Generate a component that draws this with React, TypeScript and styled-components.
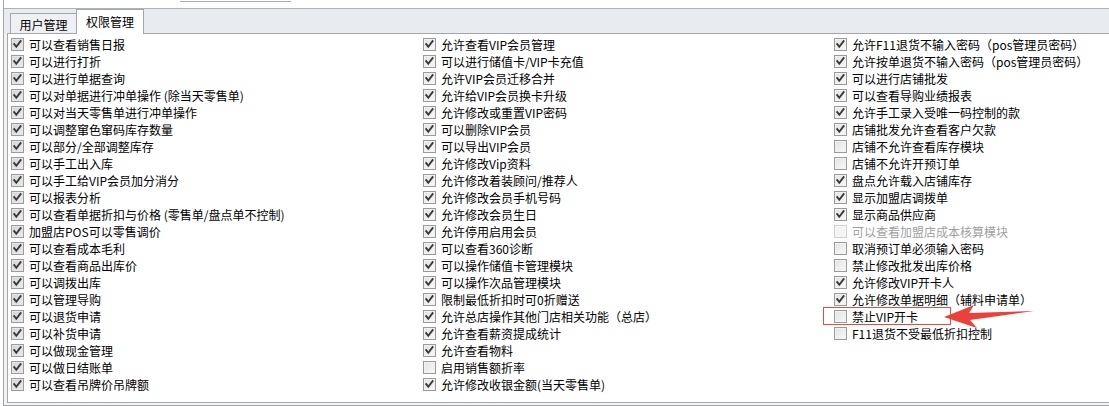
import React from "react";
import styled, { createGlobalStyle, css } from "styled-components";

const Global = createGlobalStyle`
  html, body { margin: 0; padding: 0; background: #ffffff; }
  body { font-family: "Noto Sans CJK SC", "Noto Sans", sans-serif; font-size: 12px; color: #000; }
`;

type Item = { label: string; checked: boolean; disabled?: boolean; flagged?: boolean };

const col1: Item[] = [
  "可以查看销售日报",
  "可以进行打折",
  "可以进行单据查询",
  "可以对单据进行冲单操作 (除当天零售单)",
  "可以对当天零售单进行冲单操作",
  "可以调整窜色窜码库存数量",
  "可以部分/全部调整库存",
  "可以手工出入库",
  "可以手工给VIP会员加分消分",
  "可以报表分析",
  "可以查看单据折扣与价格 (零售单/盘点单不控制)",
  "加盟店POS可以零售调价",
  "可以查看成本毛利",
  "可以查看商品出库价",
  "可以调拨出库",
  "可以管理导购",
  "可以退货申请",
  "可以补货申请",
  "可以做现金管理",
  "可以做日结账单",
  "可以查看吊牌价吊牌额",
].map((label) => ({ label, checked: true }));

const col2: Item[] = [
  { label: "允许查看VIP会员管理", checked: true },
  { label: "可以进行储值卡/VIP卡充值", checked: true },
  { label: "允许VIP会员迁移合并", checked: true },
  { label: "允许给VIP会员换卡升级", checked: true },
  { label: "允许修改或重置VIP密码", checked: true },
  { label: "可以删除VIP会员", checked: true },
  { label: "可以导出VIP会员", checked: true },
  { label: "允许修改Vip资料", checked: true },
  { label: "允许修改着装顾问/推荐人", checked: true },
  { label: "允许修改会员手机号码", checked: true },
  { label: "允许修改会员生日", checked: true },
  { label: "允许停用启用会员", checked: true },
  { label: "可以查看360诊断", checked: true },
  { label: "可以操作储值卡管理模块", checked: true },
  { label: "可以操作次品管理模块", checked: true },
  { label: "限制最低折扣时可0折赠送", checked: true },
  { label: "允许总店操作其他门店相关功能（总店）", checked: true },
  { label: "允许查看薪资提成统计", checked: true },
  { label: "允许查看物料", checked: true },
  { label: "启用销售额折率", checked: false },
  { label: "允许修改收银金额(当天零售单)", checked: true },
];

const col3: Item[] = [
  { label: "允许F11退货不输入密码（pos管理员密码）", checked: true },
  { label: "允许按单退货不输入密码（pos管理员密码）", checked: true },
  { label: "可以进行店铺批发", checked: true },
  { label: "可以查看导购业绩报表", checked: true },
  { label: "允许手工录入受唯一码控制的款", checked: true },
  { label: "店铺批发允许查看客户欠款", checked: true },
  { label: "店铺不允许查看库存模块", checked: false },
  { label: "店铺不允许开预订单", checked: false },
  { label: "盘点允许载入店铺库存", checked: true },
  { label: "显示加盟店调拨单", checked: true },
  { label: "显示商品供应商", checked: true },
  { label: "可以查看加盟店成本核算模块", checked: false, disabled: true },
  { label: "取消预订单必须输入密码", checked: false },
  { label: "禁止修改批发出库价格", checked: false },
  { label: "允许修改VIP开卡人", checked: true },
  { label: "允许修改单据明细（辅料申请单）", checked: true },
  { label: "禁止VIP开卡", checked: false, flagged: true },
  { label: "F11退货不受最低折扣控制", checked: false },
];

const Frame = styled.div`
  margin-left: 3px;
  width: calc(100vw - 3px);
  height: 406px;
  box-sizing: border-box;
  border-left: 1px solid #a3a6ab;
  border-bottom: 1px solid #a3a6ab;
  display: flex;
  flex-direction: column;
  overflow: hidden;
`;

const TopStrip = styled.div`
  height: 8px;
  background: #ffffff;
  display: flex;
`;

const FieldStub = styled.div`
  margin-left: 176px;
  width: 111px;
  height: 1px;
  border-bottom: 1px solid #a9acb2;
`;

const TabBar = styled.div`
  height: 24px;
  border-top: 1px solid #aeb2b9;
  background: #e8ebf0;
  display: flex;
  align-items: flex-end;
  padding-left: 6px;
`;

const Tab = styled.div<{ $active?: boolean }>`
  box-sizing: border-box;
  display: flex;
  align-items: center;
  justify-content: center;
  border: 1px solid #a3a6ab;
  border-bottom: none;
  font-size: 12px;
  color: #000;
  ${(p) =>
    p.$active
      ? css`
          width: 68px;
          height: 25px;
          margin-left: -1px;
          margin-bottom: -1px;
          background: #ffffff;
          position: relative;
          z-index: 1;
          padding-bottom: 2px;
        `
      : css`
          width: 67px;
          height: 20px;
          background: #eef0f3;
          padding-top: 1px;
        `}
`;

const Body = styled.div`
  flex: 1;
  background: #f2f2f2;
  padding: 0 0 2px 3px;
  display: flex;
  flex-direction: column;
`;

const Panel = styled.div`
  flex: 1;
  background: #ffffff;
  border: 1px solid #a3a6ab;
  border-right: none;
  padding: 2px 0 0 3px;
  display: grid;
  grid-template-columns: 412px 411px 1fr;
  align-items: start;
`;

const Column = styled.div`
  display: flex;
  flex-direction: column;
`;

const Row = styled.div<{ $disabled?: boolean }>`
  position: relative;
  height: 17px;
  display: flex;
  align-items: center;
  gap: 5px;
  white-space: pre;
  color: ${(p) => (p.$disabled ? "#a0a0a0" : "#000")};
`;

const Label = styled.span`
  font-size: 12px;
  line-height: 17px;
`;

const Box = styled.span<{ $tone: "gray" | "normal"; $disabled?: boolean }>`
  width: 13px;
  height: 13px;
  box-sizing: border-box;
  flex: none;
  display: inline-flex;
  border: 1px solid ${(p) => (p.$disabled ? "#cfcfcf" : p.$tone === "gray" ? "#9c9c9c" : "#9a9a9a")};
  background: ${(p) =>
    p.$disabled
      ? "#f3f3f3"
      : p.$tone === "gray"
      ? "linear-gradient(135deg, #d4d4d4, #ececec)"
      : "linear-gradient(135deg, #e2e2e2, #f9f9f9)"};
  box-shadow: inset 0 0 0 1px ${(p) => (p.$disabled ? "#f7f7f7" : p.$tone === "gray" ? "#e6e6e6" : "#f2f2f2")};
`;

const Highlight = styled.span`
  position: absolute;
  left: -11px;
  top: -1px;
  width: 128px;
  height: 18px;
  border: 1.5px solid #ea4a43;
  box-sizing: border-box;
  pointer-events: none;
`;

const ArrowWrap = styled.svg`
  position: absolute;
  left: 106px;
  top: -8px;
  width: 100px;
  height: 32px;
  overflow: visible;
`;

function CheckBox({ checked, tone, disabled }: { checked: boolean; tone: "gray" | "normal"; disabled?: boolean }) {
  return (
    <Box $tone={tone} $disabled={disabled}>
      {checked && (
        <svg width="11" height="11" viewBox="0 0 11 11">
          <path d="M2.2 5.2 L4.3 7.8 L8.6 2.2" fill="none" stroke="#3a3a3a" strokeWidth="1.9" strokeLinecap="square" />
        </svg>
      )}
    </Box>
  );
}

function Arrow() {
  return (
    <ArrowWrap viewBox="0 0 100 32">
      <polygon points="4,17 34,5 29,13 94,11 30,20 37,28" fill="#ec4038" />
    </ArrowWrap>
  );
}

function List({ items, tone }: { items: Item[]; tone: "gray" | "normal" }) {
  return (
    <Column>
      {items.map((it) => (
        <Row key={it.label} $disabled={it.disabled}>
          <CheckBox checked={it.checked} tone={tone} disabled={it.disabled} />
          <Label>{it.label}</Label>
          {it.flagged && (
            <>
              <Highlight />
              <Arrow />
            </>
          )}
        </Row>
      ))}
    </Column>
  );
}

export default function App() {
  return (
    <>
      <Global />
      <Frame>
        <TopStrip>
          <FieldStub />
        </TopStrip>
        <TabBar>
          <Tab>用户管理</Tab>
          <Tab $active>权限管理</Tab>
        </TabBar>
        <Body>
          <Panel>
            <List items={col1} tone="gray" />
            <List items={col2} tone="normal" />
            <List items={col3} tone="normal" />
          </Panel>
        </Body>
      </Frame>
    </>
  );
}
